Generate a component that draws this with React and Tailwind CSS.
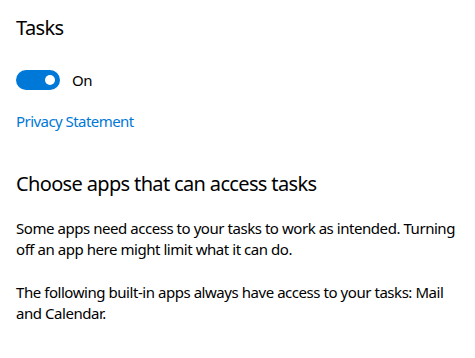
import React, { useState } from 'react'

export default function App() {
  const [on, setOn] = useState(true)

  return (
    <div className="w-[475px] h-[358px] bg-white text-black pl-4 pt-[14px] font-['Noto_Sans','Open_Sans',sans-serif] overflow-hidden">
      <h1 className="text-[20px] leading-[28px] font-normal tracking-[-0.6px]">Tasks</h1>

      <div className="flex items-center gap-3 mt-[28px] h-5">
        <button
          onClick={() => setOn(v => !v)}
          className={`w-[44px] h-5 rounded-full flex items-center px-[5px] ${on ? 'bg-[#0078d7] justify-end' : 'bg-white border-2 border-black justify-start'}`}
        >
          <span className={`w-[10px] h-[10px] rounded-full ${on ? 'bg-white' : 'bg-black'}`} />
        </button>
        <span className="text-[15px] leading-5 tracking-[-0.4px]">{on ? 'On' : 'Off'}</span>
      </div>

      <a className="block mt-[21px] text-[15px] leading-5 tracking-[-0.55px] text-[#0078d7]">Privacy Statement</a>

      <h2 className="mt-[39px] text-[20px] leading-[28px] font-normal tracking-[-0.65px]">Choose apps that can access tasks</h2>

      <p className="mt-[20px] text-[15px] leading-[21px] tracking-[-0.45px] w-[450px]">
        Some apps need access to your tasks to work as intended. Turning off an app here might limit what it can do.
      </p>

      <p className="mt-[22px] text-[15px] leading-[21px] tracking-[-0.45px] w-[450px]">
        The following built-in apps always have access to your tasks: Mail and Calendar.
      </p>
    </div>
  )
}
